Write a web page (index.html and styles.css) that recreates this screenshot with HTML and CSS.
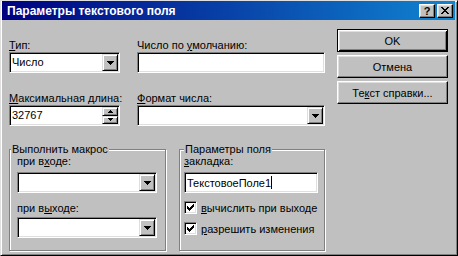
FILE: index.html
```html
<!DOCTYPE html>
<html lang="ru">
<head>
  <meta charset="UTF-8" />
  <title>Параметры текстового поля</title>
  <link rel="stylesheet" href="styles.css">
</head>
<body>
  <div class="window">
    <div class="titlebar">
      <span class="title">Параметры текстового поля</span>
      <div class="caption-btn help">?</div>
      <div class="caption-btn close">
        <svg width="8" height="7" viewBox="0 0 8 7"><path d="M0 0h2v1h-2zM6 0h2v1h-2zM1 1h2v1h-2zM5 1h2v1h-2zM2 2h4v1h-4zM3 3h2v1h-2zM2 4h4v1h-4zM1 5h2v1h-2zM5 5h2v1h-2zM0 6h2v1h-2zM6 6h2v1h-2z"/></svg>
      </div>
    </div>

    <div class="content">
      <div class="main">
        <!-- первая строка -->
        <div class="row">
          <div class="col-a">
            <div class="label"><u>Т</u>ип:</div>
            <div class="field combo">
              <span class="value">Число</span>
              <span class="drop"><svg width="7" height="4" viewBox="0 0 7 4"><path d="M0 0h7v1H0zM1 1h5v1H1zM2 2h3v1H2zM3 3h1v1H3z"/></svg></span>
            </div>
          </div>
          <div class="col-b">
            <div class="label">Число по <u>у</u>молчанию:</div>
            <div class="field"></div>
          </div>
        </div>

        <!-- вторая строка -->
        <div class="row">
          <div class="col-a">
            <div class="label"><u>М</u>аксимальная длина:</div>
            <div class="field combo">
              <span class="value">32767</span>
              <span class="spin">
                <span class="spin-btn"><svg width="5" height="3" viewBox="0 0 5 3"><path d="M2 0h1v1H2zM1 1h3v1H1zM0 2h5v1H0z"/></svg></span>
                <span class="spin-btn"><svg width="5" height="3" viewBox="0 0 5 3"><path d="M0 0h5v1H0zM1 1h3v1H1zM2 2h1v1H2z"/></svg></span>
              </span>
            </div>
          </div>
          <div class="col-b">
            <div class="label"><u>Ф</u>ормат числа:</div>
            <div class="field combo">
              <span class="value"></span>
              <span class="drop"><svg width="7" height="4" viewBox="0 0 7 4"><path d="M0 0h7v1H0zM1 1h5v1H1zM2 2h3v1H2zM3 3h1v1H3z"/></svg></span>
            </div>
          </div>
        </div>

        <!-- группы -->
        <div class="groups">
          <fieldset class="group macro">
            <legend>Выполнить макрос</legend>
            <div class="label">при в<u>х</u>оде:</div>
            <div class="field combo">
              <span class="value"></span>
              <span class="drop"><svg width="7" height="4" viewBox="0 0 7 4"><path d="M0 0h7v1H0zM1 1h5v1H1zM2 2h3v1H2zM3 3h1v1H3z"/></svg></span>
            </div>
            <div class="label exit">при в<u>ы</u>ходе:</div>
            <div class="field combo">
              <span class="value"></span>
              <span class="drop"><svg width="7" height="4" viewBox="0 0 7 4"><path d="M0 0h7v1H0zM1 1h5v1H1zM2 2h3v1H2zM3 3h1v1H3z"/></svg></span>
            </div>
          </fieldset>

          <fieldset class="group params">
            <legend>Параметры поля</legend>
            <div class="label"><u>з</u>акладка:</div>
            <div class="field"><span class="value">ТекстовоеПоле1</span><span class="caret"></span></div>
            <div class="check-row">
              <span class="checkbox"><svg width="7" height="7" viewBox="0 0 7 7"><path d="M6 0h1v3h-1zM5 1h1v3h-1zM4 2h1v3h-1zM3 3h1v3h-1zM2 4h1v3h-1zM1 3h1v3h-1zM0 2h1v3h-1z"/></svg></span>
              <span><u>в</u>ычислить при выходе</span>
            </div>
            <div class="check-row">
              <span class="checkbox"><svg width="7" height="7" viewBox="0 0 7 7"><path d="M6 0h1v3h-1zM5 1h1v3h-1zM4 2h1v3h-1zM3 3h1v3h-1zM2 4h1v3h-1zM1 3h1v3h-1zM0 2h1v3h-1z"/></svg></span>
              <span><u>р</u>азрешить изменения</span>
            </div>
          </fieldset>
        </div>
      </div>

      <div class="side">
        <div class="btn default">OK</div>
        <div class="btn">Отмена</div>
        <div class="btn">Те<u>к</u>ст справки...</div>
      </div>
    </div>
  </div>
</body>
</html>
```

FILE: styles.css
```css
* {
  box-sizing: border-box;
  margin: 0;
  padding: 0;
}
body {
  background: #c0c0c0;
  font-family: "Liberation Sans", Arial, sans-serif;
  font-size: 11px;
  color: #000;
}
u {
  text-underline-offset: 1px;
}
.window {
  width: 458px;
  height: 256px;
  background: #c0c0c0;
  border-top: 1px solid #dfdfdf;
  border-left: 1px solid #dfdfdf;
  border-right: 1px solid #000;
  border-bottom: 1px solid #000;
  box-shadow: inset 1px 1px #fff, inset -1px -1px #808080;
  padding: 0 2px 2px 1px;
}

/* заголовок */
.titlebar {
  height: 19px;
  display: flex;
  align-items: center;
  gap: 2px;
  padding: 0 2px 0 5px;
  background: linear-gradient(to right, #000080, #1084d0);
  color: #fff;
}
.title {
  flex: 1;
  font-weight: bold;
  font-size: 12px;
}
.caption-btn {
  width: 16px;
  height: 14px;
  display: flex;
  align-items: center;
  justify-content: center;
  background: #c0c0c0;
  color: #000;
  border-top: 1px solid #fff;
  border-left: 1px solid #fff;
  border-right: 1px solid #000;
  border-bottom: 1px solid #000;
  box-shadow: inset -1px -1px #808080, inset 1px 1px #dfdfdf;
  font-weight: bold;
  font-size: 11px;
}

/* содержимое */
.content {
  display: flex;
  gap: 12px;
  padding: 9px 0 0 7px;
}
.main {
  width: 316px;
  margin-top: 10px;
}
.row {
  display: flex;
  gap: 17px;
}
.row + .row {
  margin-top: 19px;
}
.col-a {
  width: 111px;
}
.col-b {
  width: 188px;
}
.label {
  height: 13px;
  line-height: 13px;
  white-space: nowrap;
}

/* поля ввода */
.field {
  height: 21px;
  display: flex;
  align-items: center;
  padding: 1px 1px 1px 2px;
  background: #fff;
  border-top: 1px solid #808080;
  border-left: 1px solid #808080;
  border-right: 1px solid #fff;
  border-bottom: 1px solid #fff;
  box-shadow: inset 1px 1px #000, inset -1px -1px #dfdfdf;
}
.value {
  flex: 1;
  white-space: nowrap;
}
.combo {
  align-items: stretch;
}
.combo .value {
  line-height: 17px;
}
.drop {
  width: 16px;
  display: flex;
  align-items: center;
  justify-content: center;
  background: #c0c0c0;
  border-top: 1px solid #dfdfdf;
  border-left: 1px solid #dfdfdf;
  border-right: 1px solid #000;
  border-bottom: 1px solid #000;
  box-shadow: inset 1px 1px #fff, inset -1px -1px #808080;
}
.spin {
  width: 16px;
  display: flex;
  flex-direction: column;
}
.spin-btn {
  flex: 1;
  display: flex;
  align-items: center;
  justify-content: center;
  background: #c0c0c0;
  border-top: 1px solid #dfdfdf;
  border-left: 1px solid #dfdfdf;
  border-right: 1px solid #000;
  border-bottom: 1px solid #000;
  box-shadow: inset 1px 1px #fff, inset -1px -1px #808080;
}
.caret {
  width: 1px;
  height: 13px;
  background: #000;
  margin-right: auto;
}
.params .value {
  flex: none;
}

/* группы */
.groups {
  display: flex;
  gap: 13px;
  margin-top: 17px;
}
.group {
  height: 108px;
  border: 1px solid #808080;
  box-shadow: inset 1px 1px #fff, 1px 1px #fff;
  padding: 0 8px 0 7px;
}
.group legend {
  line-height: 12px;
  padding: 0 1px;
  background: #c0c0c0;
}
.macro {
  width: 157px;
}
.macro legend {
  margin-left: -6px;
}
.params {
  width: 146px;
  padding: 0 6px 0 4px;
}
.params legend {
  margin-left: 0;
}
.group .field {
  margin-top: 4px;
}
.group .label.exit {
  margin-top: 9px;
}
.group .exit + .field {
  margin-top: 2px;
}
.check-row {
  display: flex;
  align-items: center;
  gap: 4px;
  height: 13px;
  margin-top: 8px;
  white-space: nowrap;
}
.checkbox {
  width: 13px;
  height: 13px;
  display: flex;
  align-items: center;
  justify-content: center;
  background: #fff;
  border-top: 1px solid #808080;
  border-left: 1px solid #808080;
  border-right: 1px solid #fff;
  border-bottom: 1px solid #fff;
  box-shadow: inset 1px 1px #000, inset -1px -1px #dfdfdf;
}

/* кнопки */
.side {
  width: 111px;
  display: flex;
  flex-direction: column;
  gap: 3px;
}
.btn {
  height: 23px;
  display: flex;
  align-items: center;
  justify-content: center;
  background: #c0c0c0;
  border-top: 1px solid #fff;
  border-left: 1px solid #fff;
  border-right: 1px solid #000;
  border-bottom: 1px solid #000;
  box-shadow: inset -1px -1px #808080, inset 1px 1px #dfdfdf;
}
.btn.default {
  border: 1px solid #000;
  box-shadow: inset 1px 1px #fff, inset -1px -1px #000, inset 2px 2px #dfdfdf, inset -2px -2px #808080;
}
```
